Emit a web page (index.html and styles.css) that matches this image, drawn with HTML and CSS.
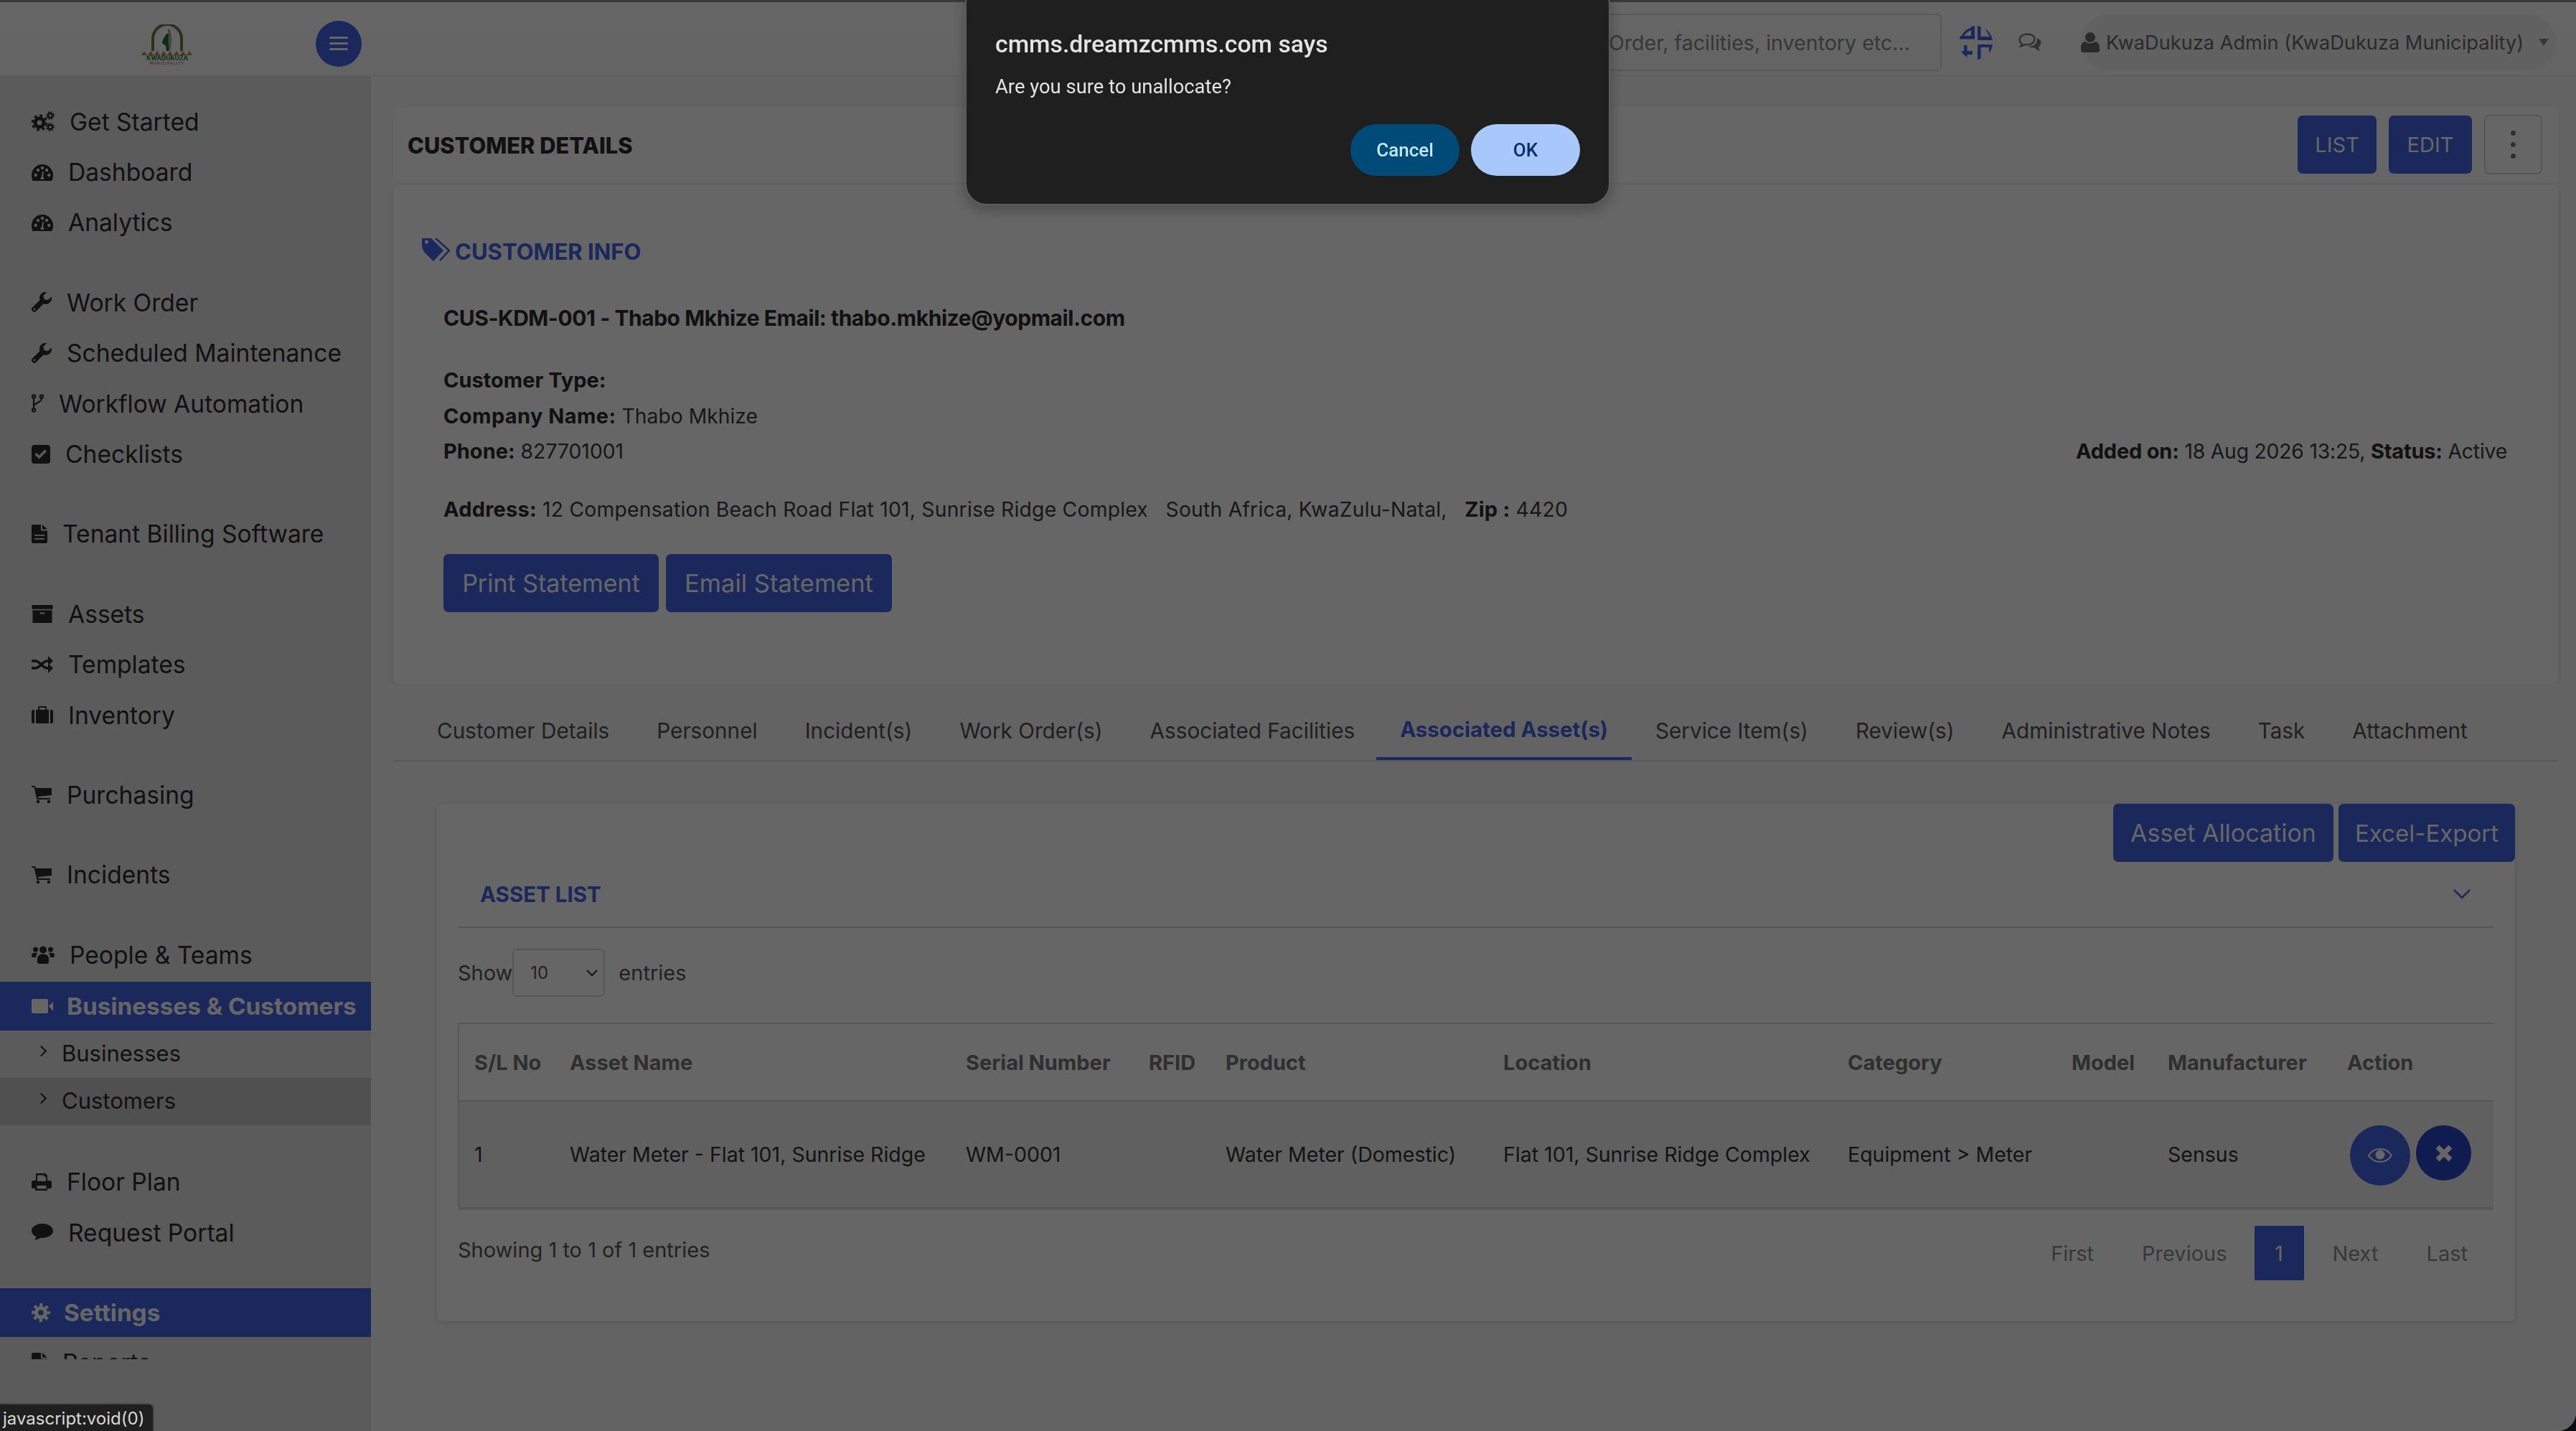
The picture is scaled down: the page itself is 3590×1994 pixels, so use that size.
FILE: index.html
```html
<!DOCTYPE html>
<html lang="en">
<head>
    <meta charset="UTF-8">
    <meta name="viewport" content="width=device-width, initial-scale=1.0">
    <title>Customer Details</title>
    <link rel="stylesheet" href="styles.css">
</head>
<body>
    <svg class="sprites" width="0" height="0">
        <clipPath id="scan-clip"><circle cx="23.5" cy="23.5" r="23.5"/></clipPath>
        <symbol id="i-gears" viewBox="0 0 32 28">
            <circle cx="11" cy="16" r="6" fill="none" stroke="currentColor" stroke-width="5"/>
            <circle cx="11" cy="16" r="10" fill="none" stroke="currentColor" stroke-width="3" stroke-dasharray="3.9 3.95"/>
            <circle cx="26" cy="6" r="3" fill="none" stroke="currentColor" stroke-width="2.4"/>
            <circle cx="26" cy="6" r="5" fill="none" stroke="currentColor" stroke-width="1.8" stroke-dasharray="2 1.93"/>
            <circle cx="26" cy="22" r="3" fill="none" stroke="currentColor" stroke-width="2.4"/>
            <circle cx="26" cy="22" r="5" fill="none" stroke="currentColor" stroke-width="1.8" stroke-dasharray="2 1.93"/>
        </symbol>
        <symbol id="i-gauge" viewBox="0 0 30 24">
            <path fill="currentColor" fill-rule="evenodd" d="M15 1A15 15 0 0 0 0 16c0 3 .6 5.800 1.600 8H28.400c1-2.200 1.600-5 1.600-8A15 15 0 0 0 15 1z M3.500 16a2.200 2.200 0 1 0 4.400 0a2.200 2.200 0 1 0-4.400 0z M6.800 9a2.200 2.200 0 1 0 4.400 0a2.200 2.200 0 1 0-4.400 0z M12.800 6a2.200 2.200 0 1 0 4.400 0a2.200 2.200 0 1 0-4.400 0z M22.100 16a2.200 2.200 0 1 0 4.400 0a2.200 2.200 0 1 0-4.400 0z M18.800 9a2.200 2.200 0 1 0 4.400 0a2.200 2.200 0 1 0-4.400 0z M12.500 20.500c0 2 5 2 5 0 0-1-.8-1.800-1.500-2L17 11h-2l-1 7.500c-.8.300-1.500 1-1.500 2z"/>
        </symbol>
        <symbol id="i-wrench" viewBox="0 0 28 28">
            <path fill="currentColor" fill-rule="evenodd" d="M27.600 6.600l-5 4.600-5-1.200-1.300-5 4.800-4.800A8 8 0 0 0 11.600 11L1.200 21.300a3.700 3.700 0 0 0 5.300 5.300L16.800 16.200A8 8 0 0 0 27.600 6.600z M2.600 23.800a1.300 1.300 0 1 0 2.600 0a1.300 1.300 0 1 0-2.600 0z"/>
        </symbol>
        <symbol id="i-fork" viewBox="0 0 17 26">
            <g fill="none" stroke="currentColor" stroke-width="2.200">
                <circle cx="3" cy="3.500" r="2.200"/>
                <circle cx="3" cy="22.500" r="2.200"/>
                <circle cx="14" cy="3.500" r="2.200"/>
                <path d="M3 6v14M14 6c0 7-11 5-11 12"/>
            </g>
        </symbol>
        <symbol id="i-check" viewBox="0 0 26 26">
            <path fill="currentColor" fill-rule="evenodd" d="M4 0h18a4 4 0 0 1 4 4v18a4 4 0 0 1-4 4H4a4 4 0 0 1-4-4V4a4 4 0 0 1 4-4z M4.500 13.500l2.500-2.500 3.500 3.500 8-8 2.500 2.500-10.500 10.500z"/>
        </symbol>
        <symbol id="i-file" viewBox="0 0 22 26">
            <path fill="currentColor" fill-rule="evenodd" d="M2 0h11v7a1.500 1.500 0 0 0 1.500 1.500H22V24a2 2 0 0 1-2 2H2a2 2 0 0 1-2-2V2a2 2 0 0 1 2-2z M4 14h14v1.800H4z M4 19h14v1.800H4z"/>
            <path fill="currentColor" d="M15 0l7 6.500h-7z"/>
        </symbol>
        <symbol id="i-archive" viewBox="0 0 28 24">
            <path fill="currentColor" fill-rule="evenodd" d="M0 0h28v5.500H0z M1 7h26v17H1z M11 10h6v2h-6z"/>
        </symbol>
        <symbol id="i-random" viewBox="0 0 30 24">
            <path fill="none" stroke="currentColor" stroke-width="3.500" d="M0 7h5c7 0 10 10 17 10h3M0 17h5c7 0 10-10 17-10h3"/>
            <path fill="currentColor" d="M23 0l7 7-7 6.500zM23 10.500l7 6.500-7 7z"/>
        </symbol>
        <symbol id="i-case" viewBox="0 0 30 24">
            <path fill="currentColor" d="M4 5H2.500A2.500 2.500 0 0 0 0 7.500v14A2.500 2.500 0 0 0 2.500 24H4zM6 5v19h18V5zM26 5v19h1.500a2.500 2.500 0 0 0 2.500-2.500v-14A2.500 2.500 0 0 0 27.500 5z"/>
            <path fill="none" stroke="currentColor" stroke-width="2" d="M10 6V2a1 1 0 0 1 1-1h8a1 1 0 0 1 1 1v4"/>
        </symbol>
        <symbol id="i-cart" viewBox="0 0 28 24">
            <path fill="currentColor" d="M0 0h5l1 3h22v10l-19 2 .5 2H26v2H7.500L3.500 2H0z"/>
            <circle cx="9" cy="22" r="2.200" fill="currentColor"/>
            <circle cx="24" cy="22" r="2.200" fill="currentColor"/>
        </symbol>
        <symbol id="i-users" viewBox="0 0 32 26">
            <g fill="currentColor">
                <circle cx="16" cy="6.500" r="5"/>
                <circle cx="5.500" cy="6" r="3.500"/>
                <circle cx="26.500" cy="6" r="3.500"/>
                <path d="M8 19c0-4 3-6.500 8-6.500s8 2.500 8 6.500v4a3 3 0 0 1-3 3H11a3 3 0 0 1-3-3z"/>
                <path d="M0 14c0-2.500 2-3.500 5.500-3.500 1 0 2 .2 2.800.5-1.500 1.500-2.300 3.500-2.300 6H2a2 2 0 0 1-2-2zM32 14c0-2.500-2-3.500-5.500-3.500-1 0-2 .2-2.800.5 1.500 1.500 2.300 3.500 2.300 6H30a2 2 0 0 0 2-2z"/>
            </g>
        </symbol>
        <symbol id="i-video" viewBox="0 0 30 20">
            <path fill="currentColor" d="M2 0h19a2 2 0 0 1 2 2v16a2 2 0 0 1-2 2H2a2 2 0 0 1-2-2V2a2 2 0 0 1 2-2zM24 10l6-6v13z"/>
        </symbol>
        <symbol id="i-print" viewBox="0 0 28 24">
            <path fill="currentColor" fill-rule="evenodd" d="M6 0h13l3 3v7h3a3 3 0 0 1 3 3v6a2 2 0 0 1-2 2h-4v3H5v-3H2a2 2 0 0 1-2-2v-6a3 3 0 0 1 3-3h3z M8 2.500V11h12V4.500h-2.500v-2z M7.500 17v4.500h13V17z"/>
        </symbol>
        <symbol id="i-comment" viewBox="0 0 30 24">
            <path fill="currentColor" d="M15 0C6.700 0 0 4.500 0 10c0 3.500 2.500 6.500 6.500 8.300-.3 1.800-1.200 3.500-2.700 4.700 3.500-.3 6.500-1.700 8.700-3.200.8.100 1.700.200 2.500.200 8.300 0 15-4.500 15-10S23.300 0 15 0z"/>
        </symbol>
        <symbol id="i-cog" viewBox="0 0 26 26">
            <circle cx="13" cy="13" r="6.500" fill="none" stroke="currentColor" stroke-width="5.500"/>
            <circle cx="13" cy="13" r="11" fill="none" stroke="currentColor" stroke-width="4" stroke-dasharray="4.400 4.240" stroke-dashoffset="2.200"/>
        </symbol>
    </svg>

    <div class="window">
        <header class="topbar">
            <div class="brand">
                <svg class="logo" width="74" height="56" viewBox="0 0 74 56">
                    <path d="M16 37V20a20 20 0 0 1 40 0v17" fill="none" stroke="#6f7a38" stroke-width="4"/>
                    <path d="M38 7c3 9 3 20 0 30" fill="none" stroke="#a0a088" stroke-width="3"/>
                    <path d="M35 13c-4 6-6 10-6 13l5 4 1 7h3V13z" fill="#1f6e42"/>
                    <path d="M0 43l4-6 4 6zM9 43l4-6 4 6zM18 43l4-6 4 6zM27 43l4-6 4 6zM36 43l4-6 4 6zM45 43l4-6 4 6zM54 43l4-6 4 6zM63 43l4-6 4 6z" fill="#c28a3a"/>
                    <text class="logo-name" x="36" y="50" text-anchor="middle">KWADUKUZA</text>
                    <text class="logo-sub" x="36" y="55.500" text-anchor="middle">MUNICIPALITY</text>
                </svg>
                <button class="menu-btn">
                    <span></span><span></span><span></span>
                </button>
            </div>
            <div class="top-tools">
                <div class="search">Search Work Order, facilities, inventory etc...</div>
                <svg class="scan" width="47" height="47" viewBox="0 0 47 47">
                    <g clip-path="url(#scan-clip)" fill="#4164e6">
                        <path d="M17 0h5v18.500H0v-4.500h17z"/>
                        <path d="M3 16A22 22 0 0 1 17 2.500v3.500A18 18 0 0 0 6.500 16z"/>
                        <path d="M26 0h4.500v15H47v5H26z"/>
                        <path d="M36 3h4l7 12h-4z"/>
                        <path d="M1 35h6v-8h4.500v8H19v5h-7.500v7H7v-7H1z"/>
                        <path d="M26 26h21v4H30.500v17H26z"/>
                        <path d="M42 30h5v12h-5z"/>
                    </g>
                </svg>
                <svg class="chat" width="32" height="26" viewBox="0 0 32 26">
                    <path fill="none" stroke="currentColor" stroke-width="2.400" d="M12 1.500C6 1.500 1.500 5 1.500 9.500c0 2.500 1.500 4.500 3.500 5.800-.2 1.200-.7 2.200-1.500 3 2-.3 4-1.200 5.500-2.200 1 .2 2 .3 3 .3 6 0 10.500-3.500 10.500-7.900S18 1.500 12 1.500z"/>
                    <path fill="currentColor" d="M26 7c3 1.500 5.500 3.800 5.500 6.500 0 2.500-1.500 4.500-3.500 5.800.2 2 1 4 2 5.700-3-.5-6-2.800-7.500-4.500-3 .3-6-.3-8.500-1.800 7 0 13-4 12-11.700z"/>
                </svg>
                <div class="user-pill">
                    <svg width="26" height="28" viewBox="0 0 26 28">
                        <circle cx="13" cy="7" r="7" fill="currentColor"/>
                        <path fill="currentColor" d="M0 21c0-5 3-8 6-8 2 1.500 4.500 2.500 7 2.500s5-1 7-2.500c3 0 6 3 6 8v4a3 3 0 0 1-3 3H3a3 3 0 0 1-3-3z"/>
                    </svg>
                    <span>KwaDukuza Admin (KwaDukuza Municipality)</span>
                    <i class="caret"></i>
                </div>
            </div>
        </header>

        <div class="layout">
            <aside class="sidebar">
                <nav class="nav">
                    <a class="nav-item"><svg width="32" height="28"><use href="#i-gears"/></svg>Get Started</a>
                    <a class="nav-item"><svg width="30" height="24"><use href="#i-gauge"/></svg>Dashboard</a>
                    <a class="nav-item"><svg width="30" height="24"><use href="#i-gauge"/></svg>Analytics</a>
                    <a class="nav-item group"><svg width="28" height="28"><use href="#i-wrench"/></svg>Work Order</a>
                    <a class="nav-item"><svg width="28" height="28"><use href="#i-wrench"/></svg>Scheduled Maintenance</a>
                    <a class="nav-item"><svg width="17" height="26"><use href="#i-fork"/></svg>Workflow Automation</a>
                    <a class="nav-item"><svg width="26" height="26"><use href="#i-check"/></svg>Checklists</a>
                    <a class="nav-item group"><svg width="22" height="26"><use href="#i-file"/></svg>Tenant Billing Software</a>
                    <a class="nav-item group"><svg width="30" height="25"><use href="#i-archive"/></svg>Assets</a>
                    <a class="nav-item"><svg width="30" height="24"><use href="#i-random"/></svg>Templates</a>
                    <a class="nav-item"><svg width="30" height="24"><use href="#i-case"/></svg>Inventory</a>
                    <a class="nav-item group"><svg width="28" height="24"><use href="#i-cart"/></svg>Purchasing</a>
                    <a class="nav-item group"><svg width="28" height="24"><use href="#i-cart"/></svg>Incidents</a>
                    <a class="nav-item group"><svg width="32" height="26"><use href="#i-users"/></svg>People &amp; Teams</a>
                    <a class="nav-item active band-biz"><svg width="30" height="20"><use href="#i-video"/></svg>Businesses &amp; Customers</a>
                    <a class="nav-sub"><i class="chev"></i>Businesses</a>
                    <a class="nav-sub current"><i class="chev"></i>Customers</a>
                    <a class="nav-item group after-sub"><svg width="28" height="24"><use href="#i-print"/></svg>Floor Plan</a>
                    <a class="nav-item"><svg width="30" height="24"><use href="#i-comment"/></svg>Request Portal</a>
                    <a class="nav-item active band-settings"><svg width="26" height="26"><use href="#i-cog"/></svg>Settings</a>
                    <a class="nav-item"><svg width="22" height="26"><use href="#i-file"/></svg>Reports</a>
                </nav>
            </aside>

            <main class="main">
                <section class="title-card">
                    <h1>CUSTOMER DETAILS</h1>
                    <div class="title-actions">
                        <button class="btn btn-list">LIST</button>
                        <button class="btn btn-edit">EDIT</button>
                        <button class="btn-more"><span></span><span></span><span></span></button>
                    </div>
                </section>

                <section class="info-card">
                    <h2 class="info-title">
                        <svg width="39" height="32" viewBox="0 0 39 32">
                            <path fill="currentColor" fill-rule="evenodd" d="M0 0h13l17 17-14 15L3 19 0 12z M4 5a2.500 2.500 0 1 0 5 0a2.500 2.500 0 1 0-5 0z"/>
                            <path fill="none" stroke="currentColor" stroke-width="2.500" d="M19 0l19 17-13 14"/>
                        </svg>
                        CUSTOMER INFO
                    </h2>
                    <p class="info-head">CUS-KDM-001 - Thabo Mkhize Email: thabo.mkhize@yopmail.com</p>
                    <div class="info-lines">
                        <p><b>Customer Type:</b></p>
                        <p class="info-company"><b>Company Name:</b> Thabo Mkhize</p>
                        <p class="info-split">
                            <span><b>Phone:</b> 827701001</span>
                            <span class="info-added"><b>Added on:</b> 18 Aug 2026 13:25, <b>Status:</b> Active</span>
                        </p>
                    </div>
                    <p class="info-address"><b>Address:</b> 12 Compensation Beach Road Flat 101, Sunrise Ridge Complex &nbsp; South Africa, KwaZulu-Natal, &nbsp;&nbsp;<b>Zip :</b> 4420</p>
                    <div class="info-actions">
                        <button class="btn btn-print">Print Statement</button>
                        <button class="btn btn-email">Email Statement</button>
                    </div>
                </section>

                <section class="detail-panel">
                    <ul class="tabs">
                        <li>Customer Details</li>
                        <li>Personnel</li>
                        <li>Incident(s)</li>
                        <li>Work Order(s)</li>
                        <li>Associated Facilities</li>
                        <li class="active">Associated Asset(s)</li>
                        <li>Service Item(s)</li>
                        <li>Review(s)</li>
                        <li>Administrative Notes</li>
                        <li>Task</li>
                        <li>Attachment</li>
                    </ul>

                    <div class="asset-card">
                        <div class="asset-actions">
                            <button class="btn btn-alloc">Asset Allocation</button>
                            <button class="btn btn-export">Excel-Export</button>
                        </div>
                        <div class="asset-head">
                            <h3>ASSET LIST</h3>
                            <svg width="24" height="14" viewBox="0 0 24 14">
                                <path fill="none" stroke="#4164e6" stroke-width="2.500" d="M1 1l11 11L23 1"/>
                            </svg>
                        </div>
                        <div class="length-row">
                            <span>Show</span>
                            <div class="length-select">
                                <span>10</span>
                                <svg width="16" height="10" viewBox="0 0 16 10">
                                    <path fill="none" stroke="#333" stroke-width="2" d="M1 1l7 7 7-7"/>
                                </svg>
                            </div>
                            <span>entries</span>
                        </div>

                        <table class="asset-table">
                            <colgroup>
                                <col class="c-no"><col class="c-name"><col class="c-serial"><col class="c-rfid"><col class="c-product">
                                <col class="c-location"><col class="c-category"><col class="c-model"><col class="c-maker"><col class="c-action">
                            </colgroup>
                            <thead>
                                <tr>
                                    <th>S/L No</th><th>Asset Name</th><th>Serial Number</th><th>RFID</th><th>Product</th>
                                    <th>Location</th><th>Category</th><th>Model</th><th>Manufacturer</th><th>Action</th>
                                </tr>
                            </thead>
                            <tbody>
                                <tr>
                                    <td>1</td>
                                    <td>Water Meter - Flat 101, Sunrise Ridge</td>
                                    <td>WM-0001</td>
                                    <td></td>
                                    <td>Water Meter (Domestic)</td>
                                    <td>Flat 101, Sunrise Ridge Complex</td>
                                    <td>Equipment &gt; Meter</td>
                                    <td></td>
                                    <td>Sensus</td>
                                    <td>
                                        <div class="row-actions">
                                            <button class="round round-view">
                                                <svg width="34" height="22" viewBox="0 0 34 22">
                                                    <path fill="none" stroke="currentColor" stroke-width="2" d="M1 11c4-6 10-9 16-9s12 3 16 9c-4 6-10 9-16 9S5 17 1 11z"/>
                                                    <circle cx="17" cy="10" r="6.500" fill="currentColor"/>
                                                </svg>
                                            </button>
                                            <button class="round round-remove">
                                                <svg width="24" height="24" viewBox="0 0 24 24">
                                                    <path fill="none" stroke="currentColor" stroke-width="7" d="M3 3l18 18M21 3L3 21"/>
                                                </svg>
                                            </button>
                                        </div>
                                    </td>
                                </tr>
                            </tbody>
                        </table>

                        <div class="table-foot">
                            <div class="table-info">Showing 1 to 1 of 1 entries</div>
                            <div class="pager">
                                <a class="pg-first">First</a>
                                <a class="pg-prev">Previous</a>
                                <a class="pg-num">1</a>
                                <a class="pg-next">Next</a>
                                <a class="pg-last">Last</a>
                            </div>
                        </div>
                    </div>
                </section>
            </main>
        </div>
    </div>

    <div class="dimmer"></div>

    <div class="dialog">
        <div class="dialog-title">cmms.dreamzcmms.com says</div>
        <div class="dialog-msg">Are you sure to unallocate?</div>
        <div class="dialog-actions">
            <button class="dlg-btn dlg-cancel">Cancel</button>
            <button class="dlg-btn dlg-ok">OK</button>
        </div>
    </div>

    <div class="status-bubble">javascript:void(0)</div>
</body>
</html>
```

FILE: styles.css
```css
* { box-sizing: border-box; }
html, body { margin: 0; height: 100%; overflow: hidden; }
body { background: #0a0c14; font-family: 'Inter', sans-serif; color: #2b2b2b; }
p, h1, h2, h3, ul { margin: 0; padding: 0; }
button { font-family: inherit; border: none; cursor: pointer; }
.sprites { position: absolute; }

.window { height: 1994px; background: #f8f8f8; border-top: 3px solid #8f8f8f; border-bottom-right-radius: 26px; overflow: hidden; }

/* top bar */
.topbar { height: 103px; display: flex; justify-content: space-between; background: linear-gradient(#fff, #fafafa); border-bottom: 1px solid #e4e4e4; }
.brand { width: 517px; display: flex; align-items: center; padding-left: 197px; padding-top: 2px; }
.logo { display: block; margin-top: 14px; }
.logo-name { font-size: 8.5px; font-weight: 800; fill: #2f8a5c; }
.logo-sub { font-size: 5px; font-weight: 700; fill: #c28a3a; letter-spacing: 1px; }
.menu-btn { width: 64px; height: 64px; margin-left: 169px; margin-top: 11px; border-radius: 50%; background: #4164e6; display: flex; flex-direction: column; justify-content: center; align-items: center; gap: 5px; }
.menu-btn span { display: block; width: 26px; height: 3px; border-radius: 2px; background: #fff; }

.top-tools { display: flex; align-items: center; padding-right: 28px; padding-top: 10px; color: #7c7c7c; }
.search { width: 900px; height: 80px; border: 2px solid #dcdcdc; border-radius: 6px; display: flex; align-items: center; justify-content: flex-end; padding-right: 42px; font-size: 28.6px; color: #8a8a8a; white-space: nowrap; }
.scan { margin-left: 24px; }
.chat { margin-left: 36px; }
.user-pill { width: 662px; height: 78px; margin-left: 55px; border-radius: 39px; background: #f2f2f2; display: flex; align-items: center; gap: 9px; font-size: 27.2px; color: #6a6a6a; white-space: nowrap; }
.caret { width: 0; height: 0; margin-left: 12px; border-left: 7.5px solid transparent; border-right: 7.5px solid transparent; border-top: 10px solid #8a8a8a; }

/* sidebar */
.layout { display: flex; height: 1888px; }
.sidebar { width: 517px; flex: none; background: #e4e4e4; }
.nav { height: 1788px; overflow: hidden; padding-top: 28px; }
.nav-item { height: 70.4px; display: flex; align-items: center; gap: 21px; padding-left: 44px; font-size: 33.6px; color: #2b2b2b; white-space: nowrap; }
.nav-item svg { flex: none; }
.nav-item.group { margin-top: 41px; }
.nav-item.active { height: 68px; background: #4164e6; color: #fff; font-weight: 700; font-size: 33.3px; gap: 19px; }
.nav-item.band-biz { margin-top: 3px; }
.nav-item.after-sub { margin-top: 43px; }
.nav-item.band-settings { margin-top: 43px; }
.nav-sub { height: 66px; display: flex; align-items: center; gap: 23px; padding: 0 0 4px 52px; font-size: 31px; color: #2b2b2b; }
.nav-sub.current { background: #c8c8c8; }
.chev { display: block; width: 11px; height: 11px; border-top: 2.5px solid #2b2b2b; border-right: 2.5px solid #2b2b2b; transform: rotate(45deg); margin-top: -6px; }

/* main column */
.main { flex: 1; padding: 44px 26px 0 31px; }
.title-card { height: 105px; display: flex; align-items: center; justify-content: space-between; padding: 0 22px 0 20px; background: #fff; border-radius: 8px 8px 0 0; }
h1 { font-size: 30.8px; font-weight: 800; color: #2b2b2b; }
.title-actions { display: flex; align-items: center; gap: 17px; margin-top: -3px; }
.btn { height: 81px; border-radius: 7px; background: #4164e6; color: #fff; font-size: 34px; }
.btn-list { width: 110px; font-size: 29px; }
.btn-edit { width: 116px; font-size: 29px; }
.btn-more { width: 81px; height: 83px; border: 2px solid #d8d8d8; border-radius: 7px; background: #fff; display: flex; flex-direction: column; align-items: center; justify-content: center; gap: 9px; }
.btn-more span { width: 7px; height: 7px; border-radius: 50%; background: #777; }

.info-card { height: 696px; margin-top: 2px; padding: 75px 71px 0 40px; background: #fff; border-radius: 8px; box-shadow: 0 2px 8px rgba(0,0,0,.12); font-size: 28.3px; color: #3a3a3a; }
.info-title { display: flex; align-items: center; gap: 7px; font-size: 31px; font-weight: 700; color: #4164e6; height: 36px; }
.info-title svg { flex: none; margin-top: -4px; }
.info-head { margin: 54px 0 0 30px; font-weight: 700; font-size: 30px; letter-spacing: -.45px; line-height: 42px; color: #2b2b2b; }
.info-lines { margin: 41px 0 0 30px; }
.info-lines p { height: 49.5px; line-height: 49.5px; white-space: pre; }
.info-lines .info-split { display: flex; justify-content: space-between; }
.info-company b { letter-spacing: .4px; }
.info-added { letter-spacing: -.2px; }
.info-address { margin: 31px 0 0 30px; line-height: 49px; white-space: nowrap; letter-spacing: .22px; }
b { font-weight: 700; font-size: 29px; color: #2b2b2b; }
.info-actions { display: flex; gap: 10px; margin: 37px 0 0 30px; }
.btn-print { width: 300px; }
.btn-email { width: 315px; font-size: 34.5px; }

/* tabs */
.detail-panel { height: 973px; background: #f8f8f8; padding-top: 24px; }
.tabs { list-style: none; display: flex; height: 84px; border-bottom: 2px solid #dcdcdc; padding-left: 28px; }
.tabs li { padding: 0 33px; display: flex; align-items: center; font-size: 29.7px; color: #505050; white-space: nowrap; height: 82px; }
.tabs li.active { margin-left: -3px; color: #4164e6; font-size: 29.4px; font-weight: 700; border-bottom: 4px solid #4164e6; }

/* asset list */
.asset-card { margin: 59px 60px 0 61px; height: 721px; background: #fff; border-radius: 8px; box-shadow: 0 2px 10px rgba(0,0,0,.14); }
.asset-actions { display: flex; justify-content: flex-end; gap: 7px; }
.btn-alloc { width: 307px; }
.btn-export { width: 246px; font-size: 33px; }
.asset-head { height: 92px; margin: 0 30px 0 29px; padding: 0 32px 0 31px; display: flex; align-items: center; justify-content: space-between; border-bottom: 2px solid #d6d6d6; }
h3 { font-size: 29.5px; font-weight: 700; color: #4164e6; }
.length-row { display: flex; align-items: center; margin: 29px 30px 36px 29px; font-size: 29px; color: #555; }
.length-select { width: 129px; height: 67px; margin: 0 19px 0 0; border: 2px solid #d6d6d6; border-radius: 6px; display: flex; align-items: center; justify-content: space-between; padding: 0 8px 0 23px; font-size: 24px; }

.asset-table { width: 2836px; margin: 0 30px 0 29px; border-collapse: collapse; table-layout: fixed; border: 2px solid #d6d6d6; border-bottom-width: 4px; border-right: none; font-size: 28.5px; }
.c-no { width: 134px; }
.c-name { width: 552px; }
.c-serial { width: 255px; }
.c-rfid { width: 107px; }
.c-product { width: 387px; }
.c-location { width: 480px; }
.c-category { width: 312px; }
.c-model { width: 134px; }
.c-maker { width: 250px; }
.c-action { width: 225px; }
.asset-table th { height: 108px; text-align: left; padding-left: 21px; font-size: 29px; font-weight: 700; color: #777; border-bottom: 2px solid #d6d6d6; white-space: nowrap; }
.asset-table td { height: 150px; padding: 0 0 0 21px; background: #f0f0f0; color: #303030; white-space: nowrap; }
.row-actions { display: flex; align-items: flex-start; gap: 8px; margin: 3px 0 0 4px; }
.round { border-radius: 50%; display: flex; align-items: center; justify-content: center; color: #fff; padding: 0; }
.round-view { width: 84px; height: 84px; background: #4164e6; }
.round-remove { width: 77px; height: 77px; background: #2a46c5; }

.table-foot { display: flex; justify-content: space-between; margin: 22px 30px 0 29px; font-size: 29px; color: #555; }
.table-info { margin-top: 14px; line-height: 40px; }
.pager { display: flex; align-items: center; height: 76px; color: #8e8e8e; margin-right: 36px; }
.pg-first { margin-right: 67px; }
.pg-prev { margin-right: 38px; }
.pg-num { width: 69px; height: 76px; display: flex; align-items: center; justify-content: center; background: #4164e6; color: #fff; border-radius: 2px; }
.pg-next { margin-left: 40px; margin-right: 67px; }

/* browser chrome on top of the page */
.dimmer { position: fixed; inset: 0; background: rgba(0,0,0,.6); border-bottom-right-radius: 26px; }
.dialog { position: fixed; left: 1345px; top: -24px; width: 899px; height: 310px; padding: 62px 40px 0; background: #1f1f1f; border: 2px solid #5c5c5c; border-radius: 30px; box-shadow: 0 6px 20px rgba(0,0,0,.3); font-family: 'Roboto', sans-serif; color: #e3e3e3; }
.dialog-title { font-size: 33.8px; font-weight: 500; line-height: 44px; }
.dialog-msg { font-size: 27.4px; line-height: 36px; margin-top: 19px; }
.dialog-actions { display: flex; justify-content: flex-end; gap: 16px; margin-top: 34px; }
.dlg-btn { height: 72px; width: 152px; border-radius: 36px; font-size: 26px; font-weight: 500; font-family: 'Roboto', sans-serif; }
.dlg-cancel { background: #004a77; color: #c2e7ff; }
.dlg-ok { background: #a8c7fa; color: #062e6f; }
.status-bubble { position: fixed; left: 0; bottom: 0; width: 215px; height: 39px; padding: 5px 0 0 4px; background: #1f1f1f; border: 2px solid #4a4a4a; border-left: none; border-bottom: none; border-top-right-radius: 8px; font-size: 24px; line-height: 30px; color: #d8d8d8; white-space: nowrap; overflow: hidden; }
```
